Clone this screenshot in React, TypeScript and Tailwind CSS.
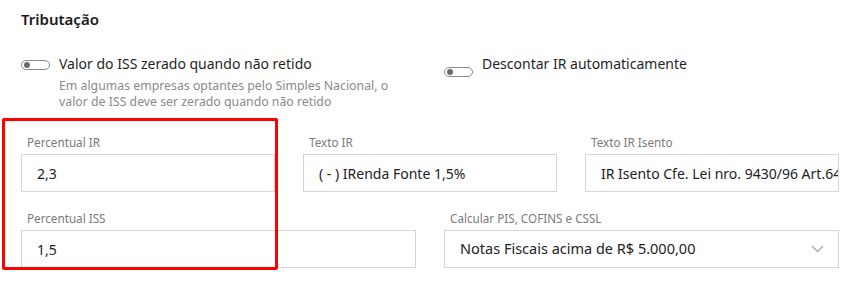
import React from "react";

const font = { fontFamily: '"Noto Sans", "Open Sans", sans-serif' };

function Toggle() {
  return (
    <span className="relative mt-[1px] inline-block h-[10px] w-[29px] shrink-0 rounded-full border border-[#8a8a8a] bg-white">
      <span className="absolute left-[2px] top-[1px] h-[6px] w-[6px] rounded-full bg-[#6b6b6b]" />
    </span>
  );
}

function Field({
  label,
  value,
  select,
}: {
  label: string;
  value: string;
  select?: boolean;
}) {
  return (
    <div className="min-w-0">
      <div className="mb-[3px] pl-[6px] text-[11.7px] leading-[18px] text-[#7a7a7a]">
        {label}
      </div>
      <div
        className={
          select
            ? "flex h-[38px] items-center overflow-hidden border border-[#d6d6d6] bg-white pl-[15px] pr-[14px]"
            : "flex h-[38px] items-center overflow-hidden border border-[#d6d6d6] bg-white pl-[15px]"
        }
      >
        <span
          className={
            select
              ? "flex-1 overflow-hidden whitespace-nowrap text-[14.5px] text-[#222]"
              : "flex-1 overflow-hidden whitespace-nowrap text-[14px] text-[#222]"
          }
        >
          {value}
        </span>
        {select ? (
          <svg width="13" height="8" viewBox="0 0 13 8" className="shrink-0">
            <polyline
              points="1,1 6.5,6.5 12,1"
              fill="none"
              stroke="#a8a8a8"
              strokeWidth="1.3"
            />
          </svg>
        ) : null}
      </div>
    </div>
  );
}

export default function App() {
  return (
    <div
      className="relative h-[290px] w-[851px] overflow-hidden bg-white pl-[21px] pr-[12px]"
      style={font}
    >
      <h2 className="pt-[8px] text-[15px] font-semibold leading-[22px] text-[#1a1a1a]">
        Tributação
      </h2>

      <div className="mt-[24px] grid grid-cols-2 gap-[28px]">
        <div>
          <div className="flex items-center gap-[9px]">
            <Toggle />
            <span className="text-[14px] leading-[20px] text-[#1f1f1f]">
              Valor do ISS zerado quando não retido
            </span>
          </div>
          <p className="mt-[4px] pl-[38px] text-[12.3px] leading-[16px] text-[#8a8a8a]">
            Em algumas empresas optantes pelo Simples Nacional, o
            <br />
            valor de ISS deve ser zerado quando não retido
          </p>
        </div>
        <div className="flex items-start gap-[9px]">
          <span className="mt-[5px]">
            <Toggle />
          </span>
          <span className="text-[14px] leading-[20px] text-[#1f1f1f]">
            Descontar IR automaticamente
          </span>
        </div>
      </div>

      <div className="mt-[23px] grid grid-cols-3 gap-[28px]">
        <Field label="Percentual IR" value="2,3" />
        <Field label="Texto IR" value="( - ) IRenda Fonte 1,5%" />
        <Field
          label="Texto IR Isento"
          value="IR Isento Cfe. Lei nro. 9430/96 Art.64"
        />
      </div>

      <div className="mt-[17px] grid grid-cols-2 gap-[28px]">
        <Field label="Percentual ISS" value="1,5" />
        <Field
          label="Calcular PIS, COFINS e CSSL"
          value="Notas Fiscais acima de R$ 5.000,00"
          select
        />
      </div>

      <div className="pointer-events-none absolute left-[2px] top-[118px] h-[152px] w-[276px] rounded-[2px] border-[3px] border-[#ff0000]" />
    </div>
  );
}
